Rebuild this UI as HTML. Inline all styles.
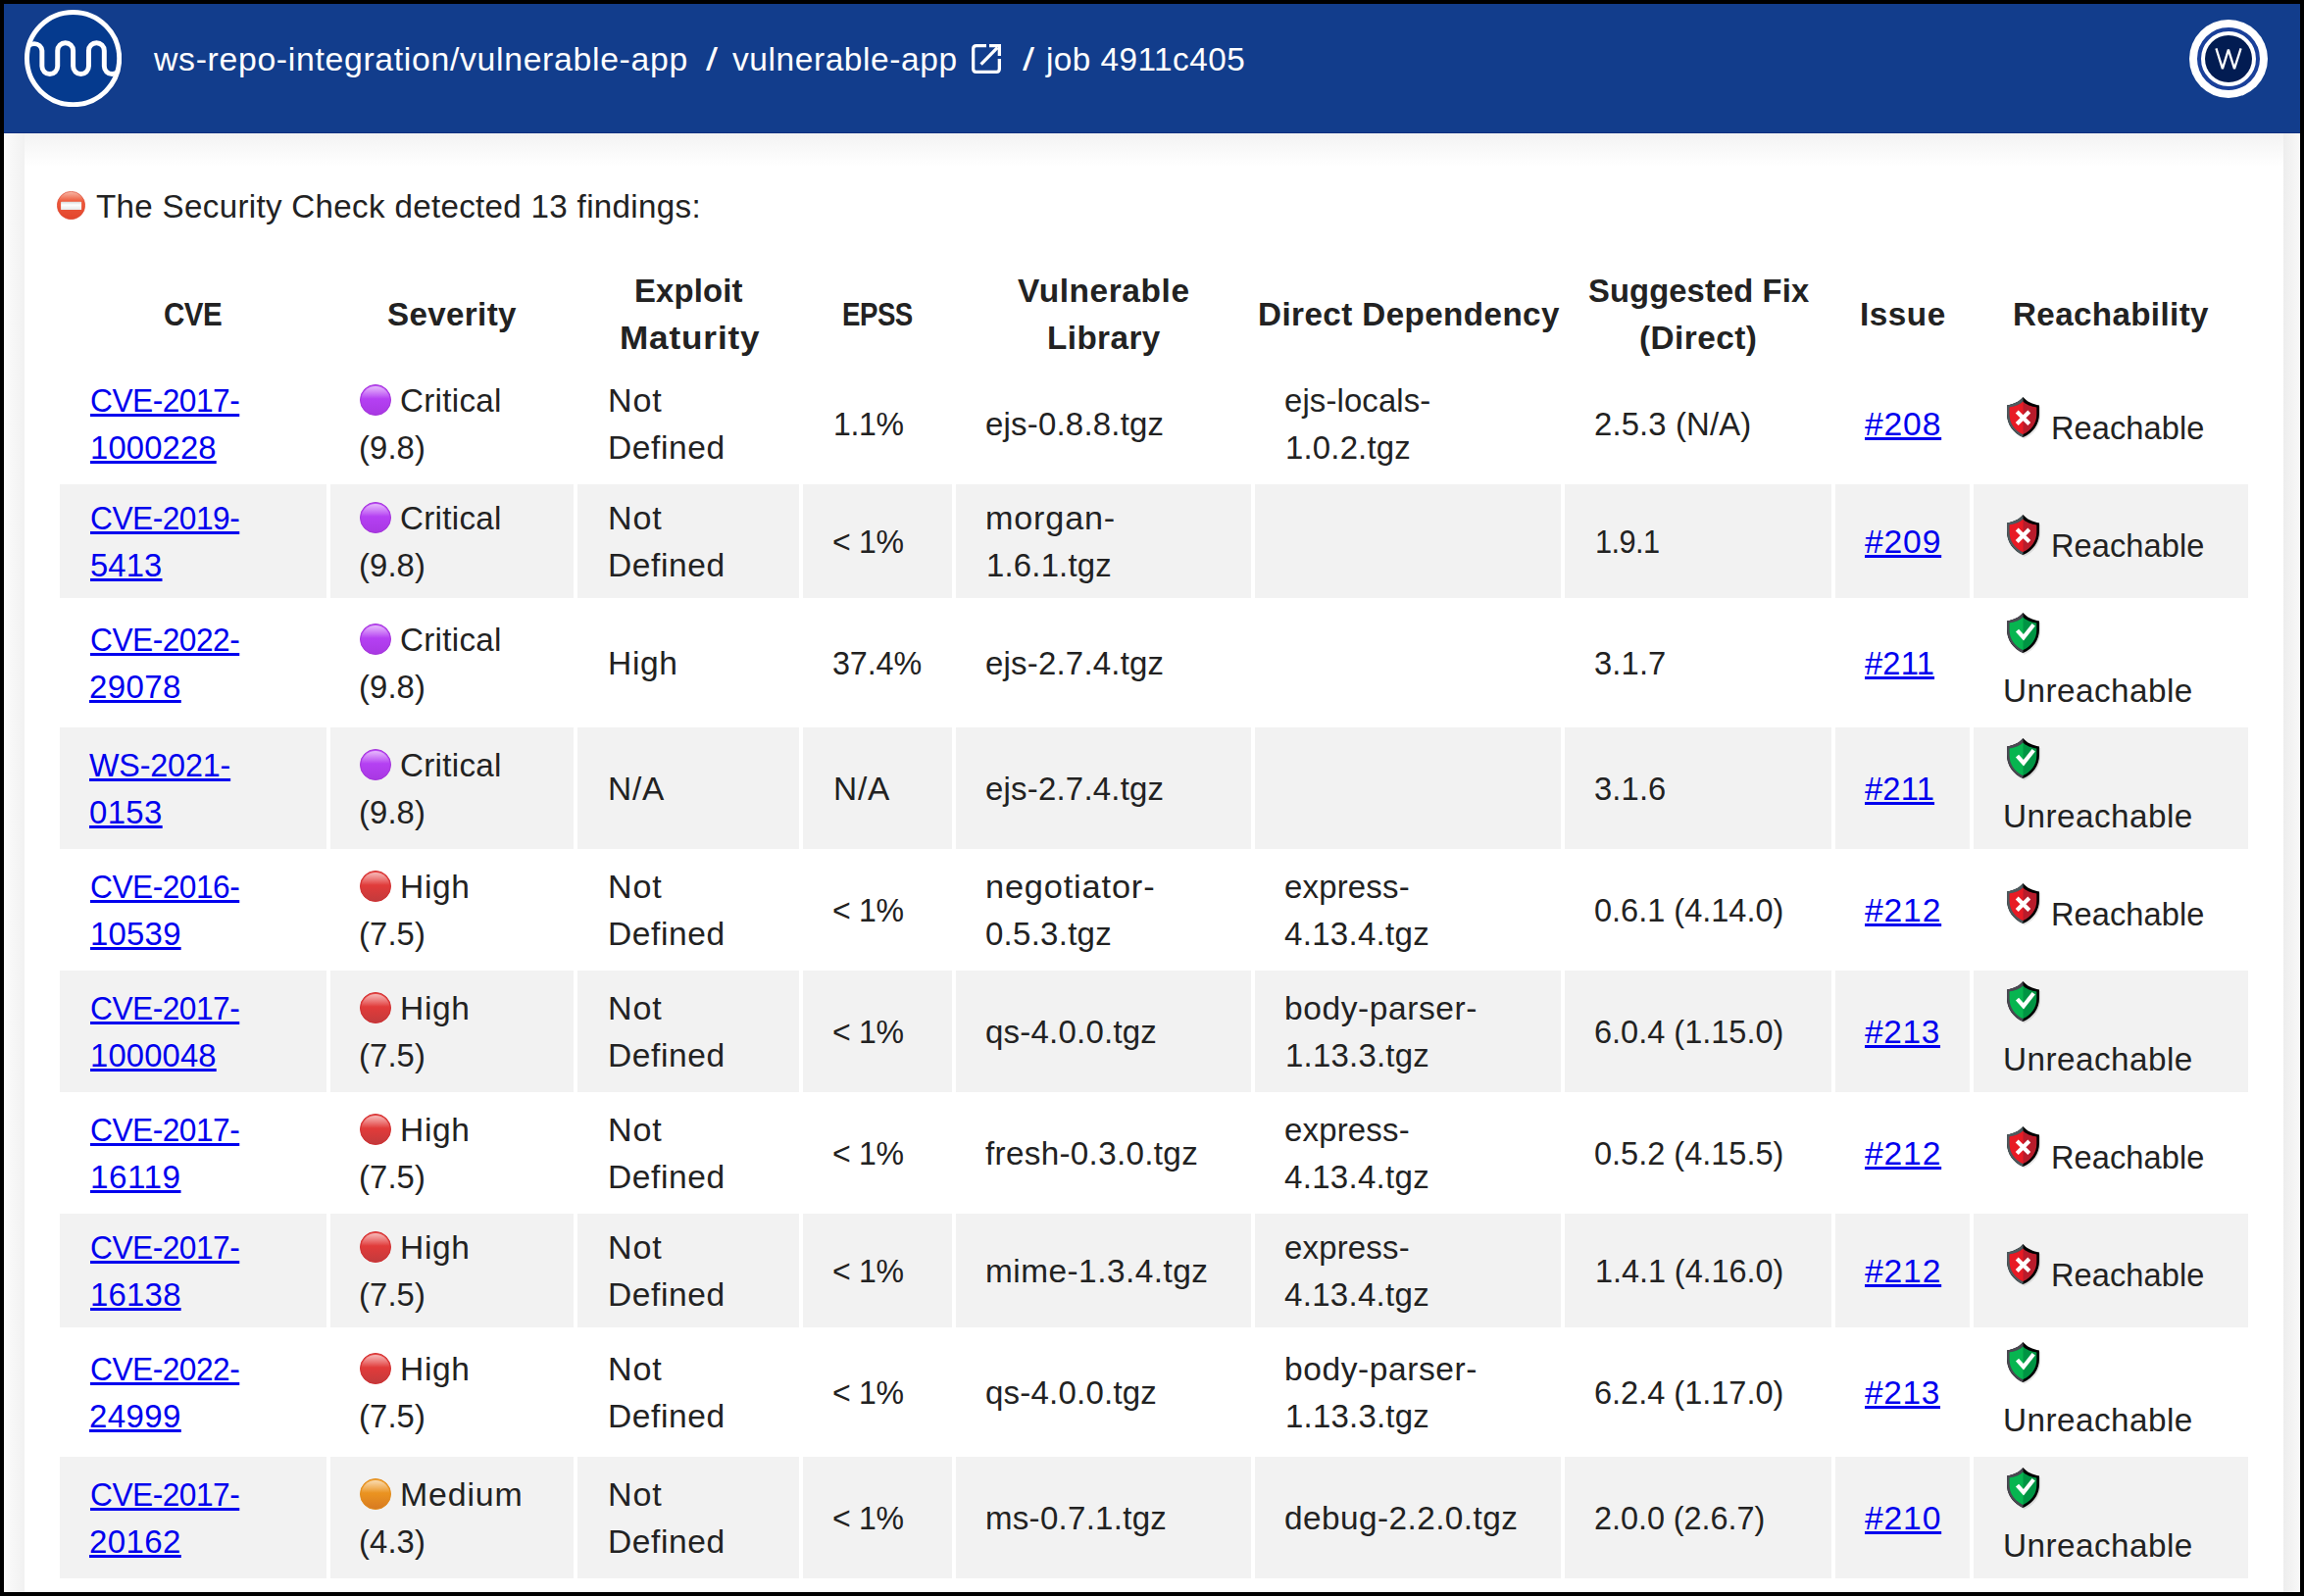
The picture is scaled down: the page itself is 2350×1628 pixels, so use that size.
<!DOCTYPE html>
<html><head><meta charset="utf-8"><style>
html,body{margin:0;padding:0;}
body{width:2350px;height:1628px;overflow:hidden;background:#000;position:relative;font-family:"Liberation Sans",sans-serif;}
.t{position:absolute;white-space:pre;line-height:40px;font-size:32.5px;color:#222;transform-origin:0 0;}
.b{font-weight:700;}
.u{text-decoration:underline;text-decoration-thickness:3px;text-underline-offset:2px;text-decoration-skip-ink:none;}
.ic{position:absolute;display:block;}
.cell{position:absolute;background:#f2f2f2;}
</style></head><body>
<svg width="0" height="0" style="position:absolute">
<defs>
<clipPath id="clipL"><rect x="-5" y="-5" width="21" height="50"/></clipPath>
<linearGradient id="g_purple" x1="0" y1="0" x2="0" y2="1"><stop offset="0" stop-color="#be4cf6"/><stop offset="0.5" stop-color="#b440f2"/><stop offset="1" stop-color="#a838e2"/></linearGradient>
<linearGradient id="g_hl" x1="0" y1="0" x2="0" y2="1"><stop offset="0" stop-color="#fff" stop-opacity="0.62"/><stop offset="0.2" stop-color="#fff" stop-opacity="0.35"/><stop offset="0.45" stop-color="#fff" stop-opacity="0"/></linearGradient>
<linearGradient id="g_red" x1="0" y1="0" x2="0" y2="1"><stop offset="0" stop-color="#e84a48"/><stop offset="0.5" stop-color="#e03b3a"/><stop offset="1" stop-color="#c23a3c"/></linearGradient>
<linearGradient id="g_orange" x1="0" y1="0" x2="0" y2="1"><stop offset="0" stop-color="#f0a030"/><stop offset="0.5" stop-color="#ea9220"/><stop offset="1" stop-color="#d77a22"/></linearGradient>
<linearGradient id="g_noentry" x1="0" y1="0" x2="0" y2="1"><stop offset="0" stop-color="#f7b9a8"/><stop offset="0.35" stop-color="#ee5a3c"/><stop offset="1" stop-color="#e2442b"/></linearGradient>
<linearGradient id="g_bar" x1="0" y1="0" x2="0" y2="1"><stop offset="0" stop-color="#d8dcdc"/><stop offset="0.4" stop-color="#ffffff"/><stop offset="1" stop-color="#e6e8e8"/></linearGradient>
</defs></svg>

<div style="position:absolute;left:4px;top:4px;width:2342px;height:1620px;background:#fff;"></div>
<div style="position:absolute;left:4px;top:136px;width:21px;height:1488px;background:linear-gradient(to right,#fbfbfb,#f1f1f1);"></div>
<div style="position:absolute;left:2329px;top:136px;width:17px;height:1488px;background:linear-gradient(to right,#ededed,#f8f8f8);"></div>
<div style="position:absolute;left:25px;top:136px;width:2304px;height:34px;background:linear-gradient(to bottom,#f3f3f3,#ffffff);"></div>
<div style="position:absolute;left:4px;top:4px;width:2342px;height:132px;background:#123d8c;"></div>
<div style="position:absolute;left:4px;top:135px;width:2342px;height:1px;background:#0a2f80;"></div>
<div class="cell" style="left:61px;top:494px;width:272px;height:116px"></div>
<div class="cell" style="left:337px;top:494px;width:248px;height:116px"></div>
<div class="cell" style="left:589px;top:494px;width:226px;height:116px"></div>
<div class="cell" style="left:819px;top:494px;width:152px;height:116px"></div>
<div class="cell" style="left:975px;top:494px;width:301px;height:116px"></div>
<div class="cell" style="left:1280px;top:494px;width:312px;height:116px"></div>
<div class="cell" style="left:1596px;top:494px;width:272px;height:116px"></div>
<div class="cell" style="left:1872px;top:494px;width:137px;height:116px"></div>
<div class="cell" style="left:2013px;top:494px;width:280px;height:116px"></div>
<div class="cell" style="left:61px;top:742px;width:272px;height:124px"></div>
<div class="cell" style="left:337px;top:742px;width:248px;height:124px"></div>
<div class="cell" style="left:589px;top:742px;width:226px;height:124px"></div>
<div class="cell" style="left:819px;top:742px;width:152px;height:124px"></div>
<div class="cell" style="left:975px;top:742px;width:301px;height:124px"></div>
<div class="cell" style="left:1280px;top:742px;width:312px;height:124px"></div>
<div class="cell" style="left:1596px;top:742px;width:272px;height:124px"></div>
<div class="cell" style="left:1872px;top:742px;width:137px;height:124px"></div>
<div class="cell" style="left:2013px;top:742px;width:280px;height:124px"></div>
<div class="cell" style="left:61px;top:990px;width:272px;height:124px"></div>
<div class="cell" style="left:337px;top:990px;width:248px;height:124px"></div>
<div class="cell" style="left:589px;top:990px;width:226px;height:124px"></div>
<div class="cell" style="left:819px;top:990px;width:152px;height:124px"></div>
<div class="cell" style="left:975px;top:990px;width:301px;height:124px"></div>
<div class="cell" style="left:1280px;top:990px;width:312px;height:124px"></div>
<div class="cell" style="left:1596px;top:990px;width:272px;height:124px"></div>
<div class="cell" style="left:1872px;top:990px;width:137px;height:124px"></div>
<div class="cell" style="left:2013px;top:990px;width:280px;height:124px"></div>
<div class="cell" style="left:61px;top:1238px;width:272px;height:116px"></div>
<div class="cell" style="left:337px;top:1238px;width:248px;height:116px"></div>
<div class="cell" style="left:589px;top:1238px;width:226px;height:116px"></div>
<div class="cell" style="left:819px;top:1238px;width:152px;height:116px"></div>
<div class="cell" style="left:975px;top:1238px;width:301px;height:116px"></div>
<div class="cell" style="left:1280px;top:1238px;width:312px;height:116px"></div>
<div class="cell" style="left:1596px;top:1238px;width:272px;height:116px"></div>
<div class="cell" style="left:1872px;top:1238px;width:137px;height:116px"></div>
<div class="cell" style="left:2013px;top:1238px;width:280px;height:116px"></div>
<div class="cell" style="left:61px;top:1486px;width:272px;height:124px"></div>
<div class="cell" style="left:337px;top:1486px;width:248px;height:124px"></div>
<div class="cell" style="left:589px;top:1486px;width:226px;height:124px"></div>
<div class="cell" style="left:819px;top:1486px;width:152px;height:124px"></div>
<div class="cell" style="left:975px;top:1486px;width:301px;height:124px"></div>
<div class="cell" style="left:1280px;top:1486px;width:312px;height:124px"></div>
<div class="cell" style="left:1596px;top:1486px;width:272px;height:124px"></div>
<div class="cell" style="left:1872px;top:1486px;width:137px;height:124px"></div>
<div class="cell" style="left:2013px;top:1486px;width:280px;height:124px"></div>
<svg class="ic" style="left:24.6px;top:9.9px" width="99.2" height="99.2" viewBox="0 0 100 100">
<defs><clipPath id="logoclip"><circle cx="50" cy="50" r="49"/></clipPath></defs>
<circle cx="50" cy="50" r="47.5" fill="#053a8e" stroke="#fff" stroke-width="5"/>
<path clip-path="url(#logoclip)" d="M2.1 42 A8 8 0 0 1 18 42 L18 58 A8 8 0 0 0 34 58 L34 42 A8 8 0 0 1 50 42 L50 58 A8 8 0 0 0 66 58 L66 42 A8 8 0 0 1 82 42 L82 58 A8 8 0 0 0 98 58" fill="none" stroke="#fff" stroke-width="5"/>
</svg>
<svg class="ic" style="left:991px;top:45px" width="30" height="30" viewBox="0 0 30 30">
<path d="M15 1.65 H4.8 Q1.65 1.65 1.65 4.8 V25.2 Q1.65 28.35 4.8 28.35 H25.2 Q28.35 28.35 28.35 25.2 V14.9" fill="none" stroke="#fff" stroke-width="3.3"/>
<path d="M18 1.65 H28.35 V11.9" fill="none" stroke="#fff" stroke-width="3.3"/>
<path d="M9.6 20.6 L26.5 3.5" fill="none" stroke="#fff" stroke-width="3.3"/>
</svg>
<svg class="ic" style="left:2233px;top:19.8px" width="80" height="80" viewBox="0 0 80 80">
<circle cx="40" cy="40" r="40" fill="#fff"/>
<circle cx="40" cy="40" r="30" fill="none" stroke="#1a409a" stroke-width="4"/>
<circle cx="40" cy="40" r="24" fill="#021c52"/>
<path d="M27.4 29.4 L33.9 50.2 L39.9 30.6 L46 50.2 L52.6 29.4" fill="none" stroke="#fff" stroke-width="2.3" stroke-linejoin="bevel"/>
</svg>
<svg class="ic" style="left:58.1px;top:195.1px" width="29" height="29" viewBox="0 0 29 29">
<circle cx="14.5" cy="14.5" r="14.2" fill="url(#g_noentry)" stroke="#d8402a" stroke-width="0.6"/>
<rect x="4.1" y="10.8" width="21" height="8.2" rx="0.6" fill="url(#g_bar)"/>
</svg>
<svg class="ic" style="left:367px;top:392.4px" width="32" height="32" viewBox="0 0 32 32"><circle cx="16" cy="16" r="15.55" fill="url(#g_purple)" stroke="#a231d8" stroke-width="0.9"/><circle cx="16" cy="16.3" r="14.4" fill="url(#g_hl)"/></svg>
<svg class="ic" style="left:2046.7px;top:404.7px;overflow:visible" width="33" height="41" viewBox="0 0 32 40" preserveAspectRatio="none"><path d="M16 0 C12.6 4.4 6.4 7.3 0 8.2 L0 16.5 C0 27.5 6.2 35.3 16 40 C25.8 35.3 32 27.5 32 16.5 L32 8.2 C25.6 7.3 19.4 4.4 16 0 Z" transform="translate(1.2,1.6)" fill="rgba(0,0,0,0.10)"/><path d="M16 0 C12.6 4.4 6.4 7.3 0 8.2 L0 16.5 C0 27.5 6.2 35.3 16 40 C25.8 35.3 32 27.5 32 16.5 L32 8.2 C25.6 7.3 19.4 4.4 16 0 Z" fill="#000"/><path d="M16 0 C12.6 4.4 6.4 7.3 0 8.2 L0 16.5 C0 27.5 6.2 35.3 16 40 C25.8 35.3 32 27.5 32 16.5 L32 8.2 C25.6 7.3 19.4 4.4 16 0 Z" fill="#4d5a5e" clip-path="url(#clipL)"/><path d="M16 4.5 C13.2 7.6 8 9.6 2.6 10.3 L2.6 17 C2.6 26.3 7.7 33 16 37.1 C24.3 33 29.4 26.3 29.4 17 L29.4 10.3 C24 9.6 18.8 7.6 16 4.5 Z" fill="#b81c2b"/><path d="M16 4.5 C13.2 7.6 8 9.6 2.6 10.3 L2.6 17 C2.6 26.3 7.7 33 16 37.1 C24.3 33 29.4 26.3 29.4 17 L29.4 10.3 C24 9.6 18.8 7.6 16 4.5 Z" fill="#e81b25" clip-path="url(#clipL)"/><path d="M9.9 14.6 L22.1 26.8 M22.1 14.6 L9.9 26.8" stroke="#fff" stroke-width="4" stroke-linecap="butt"/></svg>
<svg class="ic" style="left:367px;top:512.4px" width="32" height="32" viewBox="0 0 32 32"><circle cx="16" cy="16" r="15.55" fill="url(#g_purple)" stroke="#a231d8" stroke-width="0.9"/><circle cx="16" cy="16.3" r="14.4" fill="url(#g_hl)"/></svg>
<svg class="ic" style="left:2046.7px;top:524.7px;overflow:visible" width="33" height="41" viewBox="0 0 32 40" preserveAspectRatio="none"><path d="M16 0 C12.6 4.4 6.4 7.3 0 8.2 L0 16.5 C0 27.5 6.2 35.3 16 40 C25.8 35.3 32 27.5 32 16.5 L32 8.2 C25.6 7.3 19.4 4.4 16 0 Z" transform="translate(1.2,1.6)" fill="rgba(0,0,0,0.10)"/><path d="M16 0 C12.6 4.4 6.4 7.3 0 8.2 L0 16.5 C0 27.5 6.2 35.3 16 40 C25.8 35.3 32 27.5 32 16.5 L32 8.2 C25.6 7.3 19.4 4.4 16 0 Z" fill="#000"/><path d="M16 0 C12.6 4.4 6.4 7.3 0 8.2 L0 16.5 C0 27.5 6.2 35.3 16 40 C25.8 35.3 32 27.5 32 16.5 L32 8.2 C25.6 7.3 19.4 4.4 16 0 Z" fill="#4d5a5e" clip-path="url(#clipL)"/><path d="M16 4.5 C13.2 7.6 8 9.6 2.6 10.3 L2.6 17 C2.6 26.3 7.7 33 16 37.1 C24.3 33 29.4 26.3 29.4 17 L29.4 10.3 C24 9.6 18.8 7.6 16 4.5 Z" fill="#b81c2b"/><path d="M16 4.5 C13.2 7.6 8 9.6 2.6 10.3 L2.6 17 C2.6 26.3 7.7 33 16 37.1 C24.3 33 29.4 26.3 29.4 17 L29.4 10.3 C24 9.6 18.8 7.6 16 4.5 Z" fill="#e81b25" clip-path="url(#clipL)"/><path d="M9.9 14.6 L22.1 26.8 M22.1 14.6 L9.9 26.8" stroke="#fff" stroke-width="4" stroke-linecap="butt"/></svg>
<svg class="ic" style="left:367px;top:636.4px" width="32" height="32" viewBox="0 0 32 32"><circle cx="16" cy="16" r="15.55" fill="url(#g_purple)" stroke="#a231d8" stroke-width="0.9"/><circle cx="16" cy="16.3" r="14.4" fill="url(#g_hl)"/></svg>
<svg class="ic" style="left:2046.7px;top:625.2px;overflow:visible" width="33" height="41" viewBox="0 0 32 40" preserveAspectRatio="none"><path d="M16 0 C12.6 4.4 6.4 7.3 0 8.2 L0 16.5 C0 27.5 6.2 35.3 16 40 C25.8 35.3 32 27.5 32 16.5 L32 8.2 C25.6 7.3 19.4 4.4 16 0 Z" transform="translate(1.2,1.6)" fill="rgba(0,0,0,0.10)"/><path d="M16 0 C12.6 4.4 6.4 7.3 0 8.2 L0 16.5 C0 27.5 6.2 35.3 16 40 C25.8 35.3 32 27.5 32 16.5 L32 8.2 C25.6 7.3 19.4 4.4 16 0 Z" fill="#000"/><path d="M16 0 C12.6 4.4 6.4 7.3 0 8.2 L0 16.5 C0 27.5 6.2 35.3 16 40 C25.8 35.3 32 27.5 32 16.5 L32 8.2 C25.6 7.3 19.4 4.4 16 0 Z" fill="#4b4852" clip-path="url(#clipL)"/><path d="M16 4.5 C13.2 7.6 8 9.6 2.6 10.3 L2.6 17 C2.6 26.3 7.7 33 16 37.1 C24.3 33 29.4 26.3 29.4 17 L29.4 10.3 C24 9.6 18.8 7.6 16 4.5 Z" fill="#009443"/><path d="M16 4.5 C13.2 7.6 8 9.6 2.6 10.3 L2.6 17 C2.6 26.3 7.7 33 16 37.1 C24.3 33 29.4 26.3 29.4 17 L29.4 10.3 C24 9.6 18.8 7.6 16 4.5 Z" fill="#07b550" clip-path="url(#clipL)"/><path d="M10.2 17.6 L16.4 24.6 L26.4 11.9" stroke="#fff" stroke-width="4" fill="none" stroke-linejoin="miter"/></svg>
<svg class="ic" style="left:367px;top:764.4px" width="32" height="32" viewBox="0 0 32 32"><circle cx="16" cy="16" r="15.55" fill="url(#g_purple)" stroke="#a231d8" stroke-width="0.9"/><circle cx="16" cy="16.3" r="14.4" fill="url(#g_hl)"/></svg>
<svg class="ic" style="left:2046.7px;top:753.2px;overflow:visible" width="33" height="41" viewBox="0 0 32 40" preserveAspectRatio="none"><path d="M16 0 C12.6 4.4 6.4 7.3 0 8.2 L0 16.5 C0 27.5 6.2 35.3 16 40 C25.8 35.3 32 27.5 32 16.5 L32 8.2 C25.6 7.3 19.4 4.4 16 0 Z" transform="translate(1.2,1.6)" fill="rgba(0,0,0,0.10)"/><path d="M16 0 C12.6 4.4 6.4 7.3 0 8.2 L0 16.5 C0 27.5 6.2 35.3 16 40 C25.8 35.3 32 27.5 32 16.5 L32 8.2 C25.6 7.3 19.4 4.4 16 0 Z" fill="#000"/><path d="M16 0 C12.6 4.4 6.4 7.3 0 8.2 L0 16.5 C0 27.5 6.2 35.3 16 40 C25.8 35.3 32 27.5 32 16.5 L32 8.2 C25.6 7.3 19.4 4.4 16 0 Z" fill="#4b4852" clip-path="url(#clipL)"/><path d="M16 4.5 C13.2 7.6 8 9.6 2.6 10.3 L2.6 17 C2.6 26.3 7.7 33 16 37.1 C24.3 33 29.4 26.3 29.4 17 L29.4 10.3 C24 9.6 18.8 7.6 16 4.5 Z" fill="#009443"/><path d="M16 4.5 C13.2 7.6 8 9.6 2.6 10.3 L2.6 17 C2.6 26.3 7.7 33 16 37.1 C24.3 33 29.4 26.3 29.4 17 L29.4 10.3 C24 9.6 18.8 7.6 16 4.5 Z" fill="#07b550" clip-path="url(#clipL)"/><path d="M10.2 17.6 L16.4 24.6 L26.4 11.9" stroke="#fff" stroke-width="4" fill="none" stroke-linejoin="miter"/></svg>
<svg class="ic" style="left:367px;top:888.4px" width="32" height="32" viewBox="0 0 32 32"><circle cx="16" cy="16" r="15.55" fill="url(#g_red)" stroke="#cf2b2e" stroke-width="0.9"/><circle cx="16" cy="16.3" r="14.4" fill="url(#g_hl)"/></svg>
<svg class="ic" style="left:2046.7px;top:900.7px;overflow:visible" width="33" height="41" viewBox="0 0 32 40" preserveAspectRatio="none"><path d="M16 0 C12.6 4.4 6.4 7.3 0 8.2 L0 16.5 C0 27.5 6.2 35.3 16 40 C25.8 35.3 32 27.5 32 16.5 L32 8.2 C25.6 7.3 19.4 4.4 16 0 Z" transform="translate(1.2,1.6)" fill="rgba(0,0,0,0.10)"/><path d="M16 0 C12.6 4.4 6.4 7.3 0 8.2 L0 16.5 C0 27.5 6.2 35.3 16 40 C25.8 35.3 32 27.5 32 16.5 L32 8.2 C25.6 7.3 19.4 4.4 16 0 Z" fill="#000"/><path d="M16 0 C12.6 4.4 6.4 7.3 0 8.2 L0 16.5 C0 27.5 6.2 35.3 16 40 C25.8 35.3 32 27.5 32 16.5 L32 8.2 C25.6 7.3 19.4 4.4 16 0 Z" fill="#4d5a5e" clip-path="url(#clipL)"/><path d="M16 4.5 C13.2 7.6 8 9.6 2.6 10.3 L2.6 17 C2.6 26.3 7.7 33 16 37.1 C24.3 33 29.4 26.3 29.4 17 L29.4 10.3 C24 9.6 18.8 7.6 16 4.5 Z" fill="#b81c2b"/><path d="M16 4.5 C13.2 7.6 8 9.6 2.6 10.3 L2.6 17 C2.6 26.3 7.7 33 16 37.1 C24.3 33 29.4 26.3 29.4 17 L29.4 10.3 C24 9.6 18.8 7.6 16 4.5 Z" fill="#e81b25" clip-path="url(#clipL)"/><path d="M9.9 14.6 L22.1 26.8 M22.1 14.6 L9.9 26.8" stroke="#fff" stroke-width="4" stroke-linecap="butt"/></svg>
<svg class="ic" style="left:367px;top:1012.4000000000001px" width="32" height="32" viewBox="0 0 32 32"><circle cx="16" cy="16" r="15.55" fill="url(#g_red)" stroke="#cf2b2e" stroke-width="0.9"/><circle cx="16" cy="16.3" r="14.4" fill="url(#g_hl)"/></svg>
<svg class="ic" style="left:2046.7px;top:1001.2px;overflow:visible" width="33" height="41" viewBox="0 0 32 40" preserveAspectRatio="none"><path d="M16 0 C12.6 4.4 6.4 7.3 0 8.2 L0 16.5 C0 27.5 6.2 35.3 16 40 C25.8 35.3 32 27.5 32 16.5 L32 8.2 C25.6 7.3 19.4 4.4 16 0 Z" transform="translate(1.2,1.6)" fill="rgba(0,0,0,0.10)"/><path d="M16 0 C12.6 4.4 6.4 7.3 0 8.2 L0 16.5 C0 27.5 6.2 35.3 16 40 C25.8 35.3 32 27.5 32 16.5 L32 8.2 C25.6 7.3 19.4 4.4 16 0 Z" fill="#000"/><path d="M16 0 C12.6 4.4 6.4 7.3 0 8.2 L0 16.5 C0 27.5 6.2 35.3 16 40 C25.8 35.3 32 27.5 32 16.5 L32 8.2 C25.6 7.3 19.4 4.4 16 0 Z" fill="#4b4852" clip-path="url(#clipL)"/><path d="M16 4.5 C13.2 7.6 8 9.6 2.6 10.3 L2.6 17 C2.6 26.3 7.7 33 16 37.1 C24.3 33 29.4 26.3 29.4 17 L29.4 10.3 C24 9.6 18.8 7.6 16 4.5 Z" fill="#009443"/><path d="M16 4.5 C13.2 7.6 8 9.6 2.6 10.3 L2.6 17 C2.6 26.3 7.7 33 16 37.1 C24.3 33 29.4 26.3 29.4 17 L29.4 10.3 C24 9.6 18.8 7.6 16 4.5 Z" fill="#07b550" clip-path="url(#clipL)"/><path d="M10.2 17.6 L16.4 24.6 L26.4 11.9" stroke="#fff" stroke-width="4" fill="none" stroke-linejoin="miter"/></svg>
<svg class="ic" style="left:367px;top:1136.4px" width="32" height="32" viewBox="0 0 32 32"><circle cx="16" cy="16" r="15.55" fill="url(#g_red)" stroke="#cf2b2e" stroke-width="0.9"/><circle cx="16" cy="16.3" r="14.4" fill="url(#g_hl)"/></svg>
<svg class="ic" style="left:2046.7px;top:1148.7px;overflow:visible" width="33" height="41" viewBox="0 0 32 40" preserveAspectRatio="none"><path d="M16 0 C12.6 4.4 6.4 7.3 0 8.2 L0 16.5 C0 27.5 6.2 35.3 16 40 C25.8 35.3 32 27.5 32 16.5 L32 8.2 C25.6 7.3 19.4 4.4 16 0 Z" transform="translate(1.2,1.6)" fill="rgba(0,0,0,0.10)"/><path d="M16 0 C12.6 4.4 6.4 7.3 0 8.2 L0 16.5 C0 27.5 6.2 35.3 16 40 C25.8 35.3 32 27.5 32 16.5 L32 8.2 C25.6 7.3 19.4 4.4 16 0 Z" fill="#000"/><path d="M16 0 C12.6 4.4 6.4 7.3 0 8.2 L0 16.5 C0 27.5 6.2 35.3 16 40 C25.8 35.3 32 27.5 32 16.5 L32 8.2 C25.6 7.3 19.4 4.4 16 0 Z" fill="#4d5a5e" clip-path="url(#clipL)"/><path d="M16 4.5 C13.2 7.6 8 9.6 2.6 10.3 L2.6 17 C2.6 26.3 7.7 33 16 37.1 C24.3 33 29.4 26.3 29.4 17 L29.4 10.3 C24 9.6 18.8 7.6 16 4.5 Z" fill="#b81c2b"/><path d="M16 4.5 C13.2 7.6 8 9.6 2.6 10.3 L2.6 17 C2.6 26.3 7.7 33 16 37.1 C24.3 33 29.4 26.3 29.4 17 L29.4 10.3 C24 9.6 18.8 7.6 16 4.5 Z" fill="#e81b25" clip-path="url(#clipL)"/><path d="M9.9 14.6 L22.1 26.8 M22.1 14.6 L9.9 26.8" stroke="#fff" stroke-width="4" stroke-linecap="butt"/></svg>
<svg class="ic" style="left:367px;top:1256.4px" width="32" height="32" viewBox="0 0 32 32"><circle cx="16" cy="16" r="15.55" fill="url(#g_red)" stroke="#cf2b2e" stroke-width="0.9"/><circle cx="16" cy="16.3" r="14.4" fill="url(#g_hl)"/></svg>
<svg class="ic" style="left:2046.7px;top:1268.7px;overflow:visible" width="33" height="41" viewBox="0 0 32 40" preserveAspectRatio="none"><path d="M16 0 C12.6 4.4 6.4 7.3 0 8.2 L0 16.5 C0 27.5 6.2 35.3 16 40 C25.8 35.3 32 27.5 32 16.5 L32 8.2 C25.6 7.3 19.4 4.4 16 0 Z" transform="translate(1.2,1.6)" fill="rgba(0,0,0,0.10)"/><path d="M16 0 C12.6 4.4 6.4 7.3 0 8.2 L0 16.5 C0 27.5 6.2 35.3 16 40 C25.8 35.3 32 27.5 32 16.5 L32 8.2 C25.6 7.3 19.4 4.4 16 0 Z" fill="#000"/><path d="M16 0 C12.6 4.4 6.4 7.3 0 8.2 L0 16.5 C0 27.5 6.2 35.3 16 40 C25.8 35.3 32 27.5 32 16.5 L32 8.2 C25.6 7.3 19.4 4.4 16 0 Z" fill="#4d5a5e" clip-path="url(#clipL)"/><path d="M16 4.5 C13.2 7.6 8 9.6 2.6 10.3 L2.6 17 C2.6 26.3 7.7 33 16 37.1 C24.3 33 29.4 26.3 29.4 17 L29.4 10.3 C24 9.6 18.8 7.6 16 4.5 Z" fill="#b81c2b"/><path d="M16 4.5 C13.2 7.6 8 9.6 2.6 10.3 L2.6 17 C2.6 26.3 7.7 33 16 37.1 C24.3 33 29.4 26.3 29.4 17 L29.4 10.3 C24 9.6 18.8 7.6 16 4.5 Z" fill="#e81b25" clip-path="url(#clipL)"/><path d="M9.9 14.6 L22.1 26.8 M22.1 14.6 L9.9 26.8" stroke="#fff" stroke-width="4" stroke-linecap="butt"/></svg>
<svg class="ic" style="left:367px;top:1380.4px" width="32" height="32" viewBox="0 0 32 32"><circle cx="16" cy="16" r="15.55" fill="url(#g_red)" stroke="#cf2b2e" stroke-width="0.9"/><circle cx="16" cy="16.3" r="14.4" fill="url(#g_hl)"/></svg>
<svg class="ic" style="left:2046.7px;top:1369.2px;overflow:visible" width="33" height="41" viewBox="0 0 32 40" preserveAspectRatio="none"><path d="M16 0 C12.6 4.4 6.4 7.3 0 8.2 L0 16.5 C0 27.5 6.2 35.3 16 40 C25.8 35.3 32 27.5 32 16.5 L32 8.2 C25.6 7.3 19.4 4.4 16 0 Z" transform="translate(1.2,1.6)" fill="rgba(0,0,0,0.10)"/><path d="M16 0 C12.6 4.4 6.4 7.3 0 8.2 L0 16.5 C0 27.5 6.2 35.3 16 40 C25.8 35.3 32 27.5 32 16.5 L32 8.2 C25.6 7.3 19.4 4.4 16 0 Z" fill="#000"/><path d="M16 0 C12.6 4.4 6.4 7.3 0 8.2 L0 16.5 C0 27.5 6.2 35.3 16 40 C25.8 35.3 32 27.5 32 16.5 L32 8.2 C25.6 7.3 19.4 4.4 16 0 Z" fill="#4b4852" clip-path="url(#clipL)"/><path d="M16 4.5 C13.2 7.6 8 9.6 2.6 10.3 L2.6 17 C2.6 26.3 7.7 33 16 37.1 C24.3 33 29.4 26.3 29.4 17 L29.4 10.3 C24 9.6 18.8 7.6 16 4.5 Z" fill="#009443"/><path d="M16 4.5 C13.2 7.6 8 9.6 2.6 10.3 L2.6 17 C2.6 26.3 7.7 33 16 37.1 C24.3 33 29.4 26.3 29.4 17 L29.4 10.3 C24 9.6 18.8 7.6 16 4.5 Z" fill="#07b550" clip-path="url(#clipL)"/><path d="M10.2 17.6 L16.4 24.6 L26.4 11.9" stroke="#fff" stroke-width="4" fill="none" stroke-linejoin="miter"/></svg>
<svg class="ic" style="left:367px;top:1508.4px" width="32" height="32" viewBox="0 0 32 32"><circle cx="16" cy="16" r="15.55" fill="url(#g_orange)" stroke="#e08a1a" stroke-width="0.9"/><circle cx="16" cy="16.3" r="14.4" fill="url(#g_hl)"/></svg>
<svg class="ic" style="left:2046.7px;top:1497.2px;overflow:visible" width="33" height="41" viewBox="0 0 32 40" preserveAspectRatio="none"><path d="M16 0 C12.6 4.4 6.4 7.3 0 8.2 L0 16.5 C0 27.5 6.2 35.3 16 40 C25.8 35.3 32 27.5 32 16.5 L32 8.2 C25.6 7.3 19.4 4.4 16 0 Z" transform="translate(1.2,1.6)" fill="rgba(0,0,0,0.10)"/><path d="M16 0 C12.6 4.4 6.4 7.3 0 8.2 L0 16.5 C0 27.5 6.2 35.3 16 40 C25.8 35.3 32 27.5 32 16.5 L32 8.2 C25.6 7.3 19.4 4.4 16 0 Z" fill="#000"/><path d="M16 0 C12.6 4.4 6.4 7.3 0 8.2 L0 16.5 C0 27.5 6.2 35.3 16 40 C25.8 35.3 32 27.5 32 16.5 L32 8.2 C25.6 7.3 19.4 4.4 16 0 Z" fill="#4b4852" clip-path="url(#clipL)"/><path d="M16 4.5 C13.2 7.6 8 9.6 2.6 10.3 L2.6 17 C2.6 26.3 7.7 33 16 37.1 C24.3 33 29.4 26.3 29.4 17 L29.4 10.3 C24 9.6 18.8 7.6 16 4.5 Z" fill="#009443"/><path d="M16 4.5 C13.2 7.6 8 9.6 2.6 10.3 L2.6 17 C2.6 26.3 7.7 33 16 37.1 C24.3 33 29.4 26.3 29.4 17 L29.4 10.3 C24 9.6 18.8 7.6 16 4.5 Z" fill="#07b550" clip-path="url(#clipL)"/><path d="M10.2 17.6 L16.4 24.6 L26.4 11.9" stroke="#fff" stroke-width="4" fill="none" stroke-linejoin="miter"/></svg>
<div class="t" style="left:157.0px;top:41.0px;letter-spacing:0.636px;transform:scaleX(1.0402);color:#ffffff">ws-repo-integration/vulnerable-app</div>
<div class="t" style="left:719.5px;top:41.0px;transform:scaleX(1.3333);color:#ffffff">/</div>
<div class="t" style="left:747.0px;top:41.0px;letter-spacing:0.538px;transform:scaleX(1.0317);color:#ffffff">vulnerable-app</div>
<div class="t" style="left:1042.5px;top:41.0px;transform:scaleX(1.3333);color:#ffffff">/</div>
<div class="t" style="left:1067.0px;top:41.0px;letter-spacing:0.455px;transform:scaleX(1.0253);color:#ffffff">job 4911c405</div>
<div class="t" style="left:97.5px;top:191.0px;letter-spacing:0.308px;transform:scaleX(1.0199)">The Security Check detected 13 findings:</div>
<div class="t b" style="left:167.0px;top:301.0px;letter-spacing:-0.600px;transform:scaleX(0.9091)">CVE</div>
<div class="t b" style="left:395.2px;top:301.0px;letter-spacing:0.357px;transform:scaleX(1.0195)">Severity</div>
<div class="t b" style="left:647.3px;top:277.0px;letter-spacing:0.167px;transform:scaleX(1.0093)">Exploit</div>
<div class="t b" style="left:631.7px;top:325.0px;letter-spacing:0.800px;transform:scaleX(1.0802)">Maturity</div>
<div class="t b" style="left:859.2px;top:301.0px;letter-spacing:-0.600px;transform:scaleX(0.8516)">EPSS</div>
<div class="t b" style="left:1037.9px;top:277.0px;letter-spacing:0.556px;transform:scaleX(1.0296)">Vulnerable</div>
<div class="t b" style="left:1068.0px;top:325.0px;letter-spacing:0.417px;transform:scaleX(1.0226)">Library</div>
<div class="t b" style="left:1282.6px;top:301.0px;letter-spacing:0.406px;transform:scaleX(1.0218)">Direct Dependency</div>
<div class="t b" style="left:1619.6px;top:277.0px;letter-spacing:0.125px;transform:scaleX(1.0067)">Suggested Fix</div>
<div class="t b" style="left:1672.1px;top:325.0px;letter-spacing:0.429px;transform:scaleX(1.0261)">(Direct)</div>
<div class="t b" style="left:1896.5px;top:301.0px;letter-spacing:0.500px;transform:scaleX(1.0244)">Issue</div>
<div class="t b" style="left:2053.0px;top:301.0px;letter-spacing:0.364px;transform:scaleX(1.0206)">Reachability</div>
<div class="t u" style="left:92.0px;top:389.4px;letter-spacing:-0.500px;transform:scaleX(0.9742);color:#0000ee">CVE-2017-</div>
<div class="t u" style="left:92.0px;top:437.4px;letter-spacing:0.167px;transform:scaleX(1.0080);color:#0000ee">1000228</div>
<div class="t" style="left:408.0px;top:389.4px;letter-spacing:0.286px;transform:scaleX(1.0204)">Critical</div>
<div class="t" style="left:366.0px;top:437.4px;letter-spacing:0.125px;transform:scaleX(1.0079)">(9.8)</div>
<div class="t" style="left:619.9px;top:389.4px;letter-spacing:0.800px;transform:scaleX(1.0474)">Not</div>
<div class="t" style="left:619.9px;top:437.4px;letter-spacing:0.583px;transform:scaleX(1.0314)">Defined</div>
<div class="t" style="left:850.0px;top:413.4px;letter-spacing:-0.333px;transform:scaleX(0.9857)">1.1%</div>
<div class="t" style="left:1005.0px;top:413.4px;letter-spacing:0.208px;transform:scaleX(1.0141)">ejs-0.8.8.tgz</div>
<div class="t" style="left:1310.0px;top:389.4px;letter-spacing:0.150px;transform:scaleX(1.0103)">ejs-locals-</div>
<div class="t" style="left:1311.0px;top:437.4px;letter-spacing:0.188px;transform:scaleX(1.0121)">1.0.2.tgz</div>
<div class="t" style="left:1626.0px;top:413.4px;letter-spacing:0.150px;transform:scaleX(1.0096)">2.5.3 (N/A)</div>
<div class="t u" style="left:1902.0px;top:413.4px;letter-spacing:0.800px;transform:scaleX(1.0354);color:#0000ee">#208</div>
<div class="t" style="left:2092.0px;top:417.0px;letter-spacing:0.062px;transform:scaleX(1.0033)">Reachable</div>
<div class="t u" style="left:92.0px;top:509.4px;letter-spacing:-0.500px;transform:scaleX(0.9742);color:#0000ee">CVE-2019-</div>
<div class="t u" style="left:92.0px;top:557.4px;letter-spacing:0.167px;transform:scaleX(1.0071);color:#0000ee">5413</div>
<div class="t" style="left:408.0px;top:509.4px;letter-spacing:0.286px;transform:scaleX(1.0204)">Critical</div>
<div class="t" style="left:366.0px;top:557.4px;letter-spacing:0.125px;transform:scaleX(1.0079)">(9.8)</div>
<div class="t" style="left:619.9px;top:509.4px;letter-spacing:0.800px;transform:scaleX(1.0474)">Not</div>
<div class="t" style="left:619.9px;top:557.4px;letter-spacing:0.583px;transform:scaleX(1.0314)">Defined</div>
<div class="t" style="left:849.0px;top:533.4px;letter-spacing:-0.333px;transform:scaleX(0.9861)">&lt; 1%</div>
<div class="t" style="left:1004.9px;top:509.4px;letter-spacing:0.800px;transform:scaleX(1.0505)">morgan-</div>
<div class="t" style="left:1006.0px;top:557.4px;letter-spacing:0.188px;transform:scaleX(1.0121)">1.6.1.tgz</div>
<div class="t" style="left:1627.1px;top:533.4px;letter-spacing:-0.600px;transform:scaleX(0.9459)">1.9.1</div>
<div class="t u" style="left:1902.0px;top:533.4px;letter-spacing:0.800px;transform:scaleX(1.0354);color:#0000ee">#209</div>
<div class="t" style="left:2092.0px;top:537.0px;letter-spacing:0.062px;transform:scaleX(1.0033)">Reachable</div>
<div class="t u" style="left:92.0px;top:633.4px;letter-spacing:-0.500px;transform:scaleX(0.9742);color:#0000ee">CVE-2022-</div>
<div class="t u" style="left:91.0px;top:681.4px;letter-spacing:0.375px;transform:scaleX(1.0168);color:#0000ee">29078</div>
<div class="t" style="left:408.0px;top:633.4px;letter-spacing:0.286px;transform:scaleX(1.0204)">Critical</div>
<div class="t" style="left:366.0px;top:681.4px;letter-spacing:0.125px;transform:scaleX(1.0079)">(9.8)</div>
<div class="t" style="left:619.9px;top:657.4px;letter-spacing:0.667px;transform:scaleX(1.0308)">High</div>
<div class="t" style="left:849.0px;top:657.4px;letter-spacing:-0.125px;transform:scaleX(0.9944)">37.4%</div>
<div class="t" style="left:1005.0px;top:657.4px;letter-spacing:0.208px;transform:scaleX(1.0141)">ejs-2.7.4.tgz</div>
<div class="t" style="left:1626.0px;top:657.4px;letter-spacing:0.125px;transform:scaleX(1.0071)">3.1.7</div>
<div class="t u" style="left:1902.0px;top:657.4px;letter-spacing:0.167px;transform:scaleX(1.0072);color:#0000ee">#211</div>
<div class="t" style="left:2043.0px;top:685.0px;letter-spacing:0.450px;transform:scaleX(1.0243)">Unreachable</div>
<div class="t u" style="left:91.0px;top:761.4px;letter-spacing:-0.143px;transform:scaleX(0.9931);color:#0000ee">WS-2021-</div>
<div class="t u" style="left:91.0px;top:809.4px;letter-spacing:0.333px;transform:scaleX(1.0141);color:#0000ee">0153</div>
<div class="t" style="left:408.0px;top:761.4px;letter-spacing:0.286px;transform:scaleX(1.0204)">Critical</div>
<div class="t" style="left:366.0px;top:809.4px;letter-spacing:0.125px;transform:scaleX(1.0079)">(9.8)</div>
<div class="t" style="left:619.9px;top:785.4px;letter-spacing:0.750px;transform:scaleX(1.0280)">N/A</div>
<div class="t" style="left:849.9px;top:785.4px;letter-spacing:0.750px;transform:scaleX(1.0280)">N/A</div>
<div class="t" style="left:1005.0px;top:785.4px;letter-spacing:0.208px;transform:scaleX(1.0141)">ejs-2.7.4.tgz</div>
<div class="t" style="left:1626.0px;top:785.4px;letter-spacing:0.125px;transform:scaleX(1.0071)">3.1.6</div>
<div class="t u" style="left:1902.0px;top:785.4px;letter-spacing:0.167px;transform:scaleX(1.0072);color:#0000ee">#211</div>
<div class="t" style="left:2043.0px;top:813.0px;letter-spacing:0.450px;transform:scaleX(1.0243)">Unreachable</div>
<div class="t u" style="left:92.0px;top:885.4px;letter-spacing:-0.500px;transform:scaleX(0.9742);color:#0000ee">CVE-2016-</div>
<div class="t u" style="left:92.0px;top:933.4px;letter-spacing:0.250px;transform:scaleX(1.0114);color:#0000ee">10539</div>
<div class="t" style="left:407.9px;top:885.4px;letter-spacing:0.667px;transform:scaleX(1.0308)">High</div>
<div class="t" style="left:366.0px;top:933.4px;letter-spacing:0.125px;transform:scaleX(1.0079)">(7.5)</div>
<div class="t" style="left:619.9px;top:885.4px;letter-spacing:0.800px;transform:scaleX(1.0474)">Not</div>
<div class="t" style="left:619.9px;top:933.4px;letter-spacing:0.583px;transform:scaleX(1.0314)">Defined</div>
<div class="t" style="left:849.0px;top:909.4px;letter-spacing:-0.333px;transform:scaleX(0.9861)">&lt; 1%</div>
<div class="t" style="left:1004.9px;top:885.4px;letter-spacing:0.800px;transform:scaleX(1.0562)">negotiator-</div>
<div class="t" style="left:1005.0px;top:933.4px;letter-spacing:0.250px;transform:scaleX(1.0160)">0.5.3.tgz</div>
<div class="t" style="left:1310.0px;top:885.4px;letter-spacing:0.214px;transform:scaleX(1.0120)">express-</div>
<div class="t" style="left:1310.0px;top:933.4px;letter-spacing:0.278px;transform:scaleX(1.0173)">4.13.4.tgz</div>
<div class="t" style="left:1626.0px;top:909.4px">0.6.1 (4.14.0)</div>
<div class="t u" style="left:1902.0px;top:909.4px;letter-spacing:0.800px;transform:scaleX(1.0354);color:#0000ee">#212</div>
<div class="t" style="left:2092.0px;top:913.0px;letter-spacing:0.062px;transform:scaleX(1.0033)">Reachable</div>
<div class="t u" style="left:92.0px;top:1009.4px;letter-spacing:-0.500px;transform:scaleX(0.9742);color:#0000ee">CVE-2017-</div>
<div class="t u" style="left:92.0px;top:1057.4px;letter-spacing:0.167px;transform:scaleX(1.0080);color:#0000ee">1000048</div>
<div class="t" style="left:407.9px;top:1009.4px;letter-spacing:0.667px;transform:scaleX(1.0308)">High</div>
<div class="t" style="left:366.0px;top:1057.4px;letter-spacing:0.125px;transform:scaleX(1.0079)">(7.5)</div>
<div class="t" style="left:619.9px;top:1009.4px;letter-spacing:0.800px;transform:scaleX(1.0474)">Not</div>
<div class="t" style="left:619.9px;top:1057.4px;letter-spacing:0.583px;transform:scaleX(1.0314)">Defined</div>
<div class="t" style="left:849.0px;top:1033.4px;letter-spacing:-0.333px;transform:scaleX(0.9861)">&lt; 1%</div>
<div class="t" style="left:1005.0px;top:1033.4px;letter-spacing:0.227px;transform:scaleX(1.0147)">qs-4.0.0.tgz</div>
<div class="t" style="left:1309.9px;top:1009.4px;letter-spacing:0.545px;transform:scaleX(1.0321)">body-parser-</div>
<div class="t" style="left:1311.0px;top:1057.4px;letter-spacing:0.222px;transform:scaleX(1.0141)">1.13.3.tgz</div>
<div class="t" style="left:1626.0px;top:1033.4px">6.0.4 (1.15.0)</div>
<div class="t u" style="left:1902.0px;top:1033.4px;letter-spacing:0.667px;transform:scaleX(1.0274);color:#0000ee">#213</div>
<div class="t" style="left:2043.0px;top:1061.0px;letter-spacing:0.450px;transform:scaleX(1.0243)">Unreachable</div>
<div class="t u" style="left:92.0px;top:1133.4px;letter-spacing:-0.500px;transform:scaleX(0.9742);color:#0000ee">CVE-2017-</div>
<div class="t u" style="left:92.0px;top:1181.4px;letter-spacing:0.500px;transform:scaleX(1.0230);color:#0000ee">16119</div>
<div class="t" style="left:407.9px;top:1133.4px;letter-spacing:0.667px;transform:scaleX(1.0308)">High</div>
<div class="t" style="left:366.0px;top:1181.4px;letter-spacing:0.125px;transform:scaleX(1.0079)">(7.5)</div>
<div class="t" style="left:619.9px;top:1133.4px;letter-spacing:0.800px;transform:scaleX(1.0474)">Not</div>
<div class="t" style="left:619.9px;top:1181.4px;letter-spacing:0.583px;transform:scaleX(1.0314)">Defined</div>
<div class="t" style="left:849.0px;top:1157.4px;letter-spacing:-0.333px;transform:scaleX(0.9861)">&lt; 1%</div>
<div class="t" style="left:1005.0px;top:1157.4px;letter-spacing:0.321px;transform:scaleX(1.0213)">fresh-0.3.0.tgz</div>
<div class="t" style="left:1310.0px;top:1133.4px;letter-spacing:0.214px;transform:scaleX(1.0120)">express-</div>
<div class="t" style="left:1310.0px;top:1181.4px;letter-spacing:0.278px;transform:scaleX(1.0173)">4.13.4.tgz</div>
<div class="t" style="left:1626.0px;top:1157.4px">0.5.2 (4.15.5)</div>
<div class="t u" style="left:1902.0px;top:1157.4px;letter-spacing:0.800px;transform:scaleX(1.0354);color:#0000ee">#212</div>
<div class="t" style="left:2092.0px;top:1161.0px;letter-spacing:0.062px;transform:scaleX(1.0033)">Reachable</div>
<div class="t u" style="left:92.0px;top:1253.4px;letter-spacing:-0.500px;transform:scaleX(0.9742);color:#0000ee">CVE-2017-</div>
<div class="t u" style="left:92.0px;top:1301.4px;letter-spacing:0.250px;transform:scaleX(1.0114);color:#0000ee">16138</div>
<div class="t" style="left:407.9px;top:1253.4px;letter-spacing:0.667px;transform:scaleX(1.0308)">High</div>
<div class="t" style="left:366.0px;top:1301.4px;letter-spacing:0.125px;transform:scaleX(1.0079)">(7.5)</div>
<div class="t" style="left:619.9px;top:1253.4px;letter-spacing:0.800px;transform:scaleX(1.0474)">Not</div>
<div class="t" style="left:619.9px;top:1301.4px;letter-spacing:0.583px;transform:scaleX(1.0314)">Defined</div>
<div class="t" style="left:849.0px;top:1277.4px;letter-spacing:-0.333px;transform:scaleX(0.9861)">&lt; 1%</div>
<div class="t" style="left:1004.9px;top:1277.4px;letter-spacing:0.462px;transform:scaleX(1.0275)">mime-1.3.4.tgz</div>
<div class="t" style="left:1310.0px;top:1253.4px;letter-spacing:0.214px;transform:scaleX(1.0120)">express-</div>
<div class="t" style="left:1310.0px;top:1301.4px;letter-spacing:0.278px;transform:scaleX(1.0173)">4.13.4.tgz</div>
<div class="t" style="left:1627.0px;top:1277.4px;letter-spacing:-0.038px;transform:scaleX(0.9974)">1.4.1 (4.16.0)</div>
<div class="t u" style="left:1902.0px;top:1277.4px;letter-spacing:0.800px;transform:scaleX(1.0354);color:#0000ee">#212</div>
<div class="t" style="left:2092.0px;top:1281.0px;letter-spacing:0.062px;transform:scaleX(1.0033)">Reachable</div>
<div class="t u" style="left:92.0px;top:1377.4px;letter-spacing:-0.500px;transform:scaleX(0.9742);color:#0000ee">CVE-2022-</div>
<div class="t u" style="left:91.0px;top:1425.4px;letter-spacing:0.375px;transform:scaleX(1.0168);color:#0000ee">24999</div>
<div class="t" style="left:407.9px;top:1377.4px;letter-spacing:0.667px;transform:scaleX(1.0308)">High</div>
<div class="t" style="left:366.0px;top:1425.4px;letter-spacing:0.125px;transform:scaleX(1.0079)">(7.5)</div>
<div class="t" style="left:619.9px;top:1377.4px;letter-spacing:0.800px;transform:scaleX(1.0474)">Not</div>
<div class="t" style="left:619.9px;top:1425.4px;letter-spacing:0.583px;transform:scaleX(1.0314)">Defined</div>
<div class="t" style="left:849.0px;top:1401.4px;letter-spacing:-0.333px;transform:scaleX(0.9861)">&lt; 1%</div>
<div class="t" style="left:1005.0px;top:1401.4px;letter-spacing:0.227px;transform:scaleX(1.0147)">qs-4.0.0.tgz</div>
<div class="t" style="left:1309.9px;top:1377.4px;letter-spacing:0.545px;transform:scaleX(1.0321)">body-parser-</div>
<div class="t" style="left:1311.0px;top:1425.4px;letter-spacing:0.222px;transform:scaleX(1.0141)">1.13.3.tgz</div>
<div class="t" style="left:1626.0px;top:1401.4px">6.2.4 (1.17.0)</div>
<div class="t u" style="left:1902.0px;top:1401.4px;letter-spacing:0.667px;transform:scaleX(1.0274);color:#0000ee">#213</div>
<div class="t" style="left:2043.0px;top:1429.0px;letter-spacing:0.450px;transform:scaleX(1.0243)">Unreachable</div>
<div class="t u" style="left:92.0px;top:1505.4px;letter-spacing:-0.500px;transform:scaleX(0.9742);color:#0000ee">CVE-2017-</div>
<div class="t u" style="left:91.0px;top:1553.4px;letter-spacing:0.375px;transform:scaleX(1.0168);color:#0000ee">20162</div>
<div class="t" style="left:407.9px;top:1505.4px;letter-spacing:0.800px;transform:scaleX(1.0431)">Medium</div>
<div class="t" style="left:366.0px;top:1553.4px;letter-spacing:0.125px;transform:scaleX(1.0079)">(4.3)</div>
<div class="t" style="left:619.9px;top:1505.4px;letter-spacing:0.800px;transform:scaleX(1.0474)">Not</div>
<div class="t" style="left:619.9px;top:1553.4px;letter-spacing:0.583px;transform:scaleX(1.0314)">Defined</div>
<div class="t" style="left:849.0px;top:1529.4px;letter-spacing:-0.333px;transform:scaleX(0.9861)">&lt; 1%</div>
<div class="t" style="left:1005.0px;top:1529.4px;letter-spacing:0.273px;transform:scaleX(1.0168)">ms-0.7.1.tgz</div>
<div class="t" style="left:1310.0px;top:1529.4px;letter-spacing:0.429px;transform:scaleX(1.0261)">debug-2.2.0.tgz</div>
<div class="t" style="left:1626.0px;top:1529.4px;letter-spacing:-0.042px;transform:scaleX(0.9971)">2.0.0 (2.6.7)</div>
<div class="t u" style="left:1902.0px;top:1529.4px;letter-spacing:0.800px;transform:scaleX(1.0354);color:#0000ee">#210</div>
<div class="t" style="left:2043.0px;top:1557.0px;letter-spacing:0.450px;transform:scaleX(1.0243)">Unreachable</div>
</body></html>
